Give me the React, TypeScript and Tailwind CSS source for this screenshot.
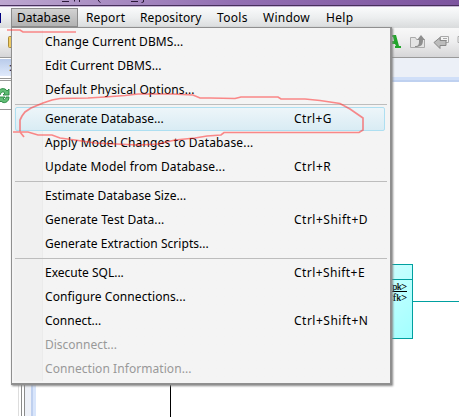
type Item = { label: string; keys?: string; off?: boolean; hot?: boolean; sp: string; ks?: string };

const groups: Item[][] = [
  [
    { label: "Change Current DBMS...", sp: "tracking-[0.09px]" },
    { label: "Edit Current DBMS...", sp: "tracking-[0.1px]" },
    { label: "Default Physical Options...", sp: "tracking-[0.1px]" },
  ],
  [
    { label: "Generate Database...", keys: "Ctrl+G", hot: true, sp: "tracking-[0.03px]", ks: "tracking-[0.4px]" },
    { label: "Apply Model Changes to Database...", sp: "tracking-[0.16px]" },
    { label: "Update Model from Database...", keys: "Ctrl+R", sp: "tracking-[0.14px]", ks: "tracking-[0.5px]" },
  ],
  [
    { label: "Estimate Database Size...", sp: "tracking-[0.05px]" },
    { label: "Generate Test Data...", keys: "Ctrl+Shift+D", sp: "tracking-[0.09px]", ks: "tracking-[0.5px]" },
    { label: "Generate Extraction Scripts...", sp: "tracking-[0.04px]" },
  ],
  [
    { label: "Execute SQL...", keys: "Ctrl+Shift+E", sp: "tracking-[0px]", ks: "tracking-[0.42px]" },
    { label: "Configure Connections...", sp: "tracking-[0.09px]" },
    { label: "Connect...", keys: "Ctrl+Shift+N", sp: "tracking-[0px]", ks: "tracking-[0.5px]" },
    { label: "Disconnect...", off: true, sp: "tracking-[0px]" },
    { label: "Connection Information...", off: true, sp: "tracking-[0.06px]" },
  ],
];

function TitleStrip() {
  return (
    <div className="h-[7px] shrink-0 bg-[#c9b8d6]">
      <div className="h-[5px] bg-linear-to-r from-[#bda7d0] via-[#9370b3] via-50% to-[#7d559f]">
        <svg className="block" width="459" height="5" stroke="#2b1838">
          <path d="M62 1.500h7M131 1.500h7" />
          <path d="M74.500 0v1.500M79.500 0v2M98.500 0v1l2 1.500M143.500 0v2l-2 .5" fill="none" />
        </svg>
      </div>
      <div className="h-px bg-[#47305c]" />
    </div>
  );
}

function MenuBar() {
  return (
    <nav className="flex h-[21px] shrink-0 items-center bg-linear-to-b from-[#fafbfc] via-[#eceeef] to-[#d9dbdc] text-[12px] leading-[18px] text-black">
      <div className="h-[10px] w-px bg-[#000080]" />
      <div className="ml-[10px] flex h-[19px] w-[67px] items-center border border-[#8b8b8b] bg-linear-to-b from-[#d2d2d2] to-[#b2b2b2] pl-[5px]">Database</div>
      <span className="ml-[8px] w-[54px] tracking-[0.16px]">Report</span>
      <span className="w-[77px] tracking-[0.12px]">Repository</span>
      <span className="w-[46px] tracking-[0.3px]">Tools</span>
      <span className="w-[63px] tracking-[0.25px]">Window</span>
      <span className="tracking-[0.3px]">Help</span>
    </nav>
  );
}

function Toolbar() {
  return (
    <div className="flex h-[29px] shrink-0 justify-between bg-linear-to-b from-[#f8f8f8] via-[#ededee] to-[#d6d6d8]">
      <svg width="12" height="29" viewBox="0 0 12 29">
        <rect x="8.5" y="8.5" width="6" height="11" rx="1" fill="#f3cd61" stroke="#a98b3c" />
      </svg>
      <svg width="75" height="29" viewBox="384 28 75 29">
        <path d="M390 35h6l3 11h2v2h-6v-2h1l-1-2h-5v-3h4l-1-4h-3z" fill="#22a52b" />
        <path d="M410.500 37.500h5l1 2h8v8h-14z" fill="#e4e4e4" stroke="#aaa" />
        <path d="M415 46c4 0 4-2 4-6h-2l4-5 4 5h-2c0 5-2 7-8 7z" fill="#8e8e8e" />
        <path d="M440.500 36.500h8v6h-8z" fill="#f3f3f3" stroke="#a9a9a9" />
        <path d="M443 38.500h4M443 40.500h4" stroke="#a9a9a9" />
        <path d="M434 42.500l6-5v3h6v5h-6v3z" fill="#bcbcbc" stroke="#888" />
        <path d="M463 36.500h-5v6h5" fill="#f3f3f3" stroke="#aaa" />
      </svg>
    </div>
  );
}

function Browser() {
  return (
    <aside className="h-full w-[36px] shrink-0 bg-white">
      <div className="h-px bg-[#999]" />
      <div className="mt-px flex h-[17px] items-center bg-linear-to-b from-[#b9cbea] to-[#e0eafb] text-[11px]">
        <span className="ml-[9px]">:</span>
      </div>
      <div className="mt-[2px] h-[3px] border-y border-[#999]" />
      <svg width="11" height="29" viewBox="0 81 11 29">
        <path d="M-2 94c0-6 7-7 9-3l2-2v6H3l2-2c-2-2-4-1-5 2z" fill="#62bd76" stroke="#23843c" strokeWidth=".9" />
        <path d="M9 97c0 6-6 7-8 4l-2 2v-6h6l-2 2c2 1 3 0 3-2z" fill="#62bd76" stroke="#23843c" strokeWidth=".9" />
        <path d="M0 109.500h11" stroke="#999" />
      </svg>
      <div className="flex h-[306px] pl-[18px]">
        <div className="w-px bg-[#ddd]" />
        <div className="ml-[2px] w-px bg-[#8b8b8b]" />
        <div className="ml-[2px] w-px bg-[#8b8b8b]" />
        <div className="w-[6px] bg-[#edf0f7]" />
        <div className="w-[2px] bg-[#bfd0ef]" />
        <div className="w-[3px] bg-[#d8e5fb]" />
      </div>
    </aside>
  );
}

function Canvas() {
  return (
    <main className="flex min-w-0 flex-1 flex-col">
      <div className="h-px bg-[#999]" />
      <div className="h-[19px] bg-[#ecf0f7]" />
      <div className="h-[5px] border-t-[3px] border-[#d0dff8] bg-[#bfd1f0]" />
      <svg className="flex-1" width="423" height="335" viewBox="36 82 423 335">
        <defs>
          <linearGradient id="entity" x2="1" y2="1">
            <stop stopColor="#e0ffff" />
            <stop offset="1" stopColor="#a2ffff" />
          </linearGradient>
        </defs>
        <path d="M170.500 370v47" stroke="#000" />
        <rect x="338.500" y="264.500" width="74" height="74" fill="url(#entity)" stroke="#00a0a0" />
        <path d="M338 279.500h74M413 301.500h46" stroke="#00a0a0" />
        <g fontFamily="Liberation Serif, serif" fontSize="10" stroke="#000" strokeWidth=".2">
          <text x="387" y="290" textLength="20">&lt;pk&gt;</text>
          <text x="387" y="301" textLength="20">&lt;fk&gt;</text>
        </g>
        <path d="M387 291.500h20" stroke="#000" />
      </svg>
    </main>
  );
}

function Row({ item }: { item: Item }) {
  return (
    <div className="h-[24px] pr-[3px] pl-px">
      <div className={"flex h-[24px] items-center rounded-[2px] border pb-px pl-[29px] leading-[20px] " + (item.hot ? "border-[#aedff1] bg-linear-to-b from-[#edf5f9] to-[#d9ecf4]" : "border-transparent") + (item.off ? " text-[#999]" : " text-black")}>
        <span className={"w-[249px] whitespace-nowrap " + item.sp}>{item.label}</span>
        <span className={"whitespace-nowrap " + (item.ks ?? "")}>{item.keys}</span>
      </div>
    </div>
  );
}

function DropMenu() {
  return (
    <div className="absolute top-[27px] left-[11px] h-[358px] w-[381px] border border-r-2 border-b-2 border-[#8f8f8f] bg-[#f4f4f4] p-[2px] text-[12px] shadow-[1px_1px_2px_#888]">
      <div className="h-full bg-linear-to-r from-[#f0f0f0] from-[28px] via-[#e2e2e2] via-[28px] to-[#f4f4f4] to-[29px]">
        {groups.map((group, i) => (
          <div key={i}>
            {i > 0 && <div className="h-[5px] pt-[2px] pl-px"><div className="h-px w-[372px] bg-[#bdbdbd]" /></div>}
            {group.map((item) => <Row key={item.label} item={item} />)}
          </div>
        ))}
      </div>
    </div>
  );
}

export default function App() {
  return (
    <div className="relative flex h-[417px] w-[459px] flex-col overflow-hidden bg-white font-['Noto_Sans',sans-serif]">
      <TitleStrip />
      <MenuBar />
      <Toolbar />
      <div className="flex min-h-0 flex-1">
        <Browser />
        <Canvas />
      </div>
      <DropMenu />
      <svg className="pointer-events-none absolute inset-0" width="459" height="417" fill="none" stroke="#ff3030" strokeOpacity=".55" strokeWidth="1.7">
        <path d="M7 30h13l3 2h53" />
        <path d="M24 137L20 132V120L22 116L25 112L31 108L43 103L52 100L60 98.500L88 98L105 97L125 95.500L138 94H172L193 95L200 98H210L235 98.500L241 97H278L281 99H305L320 100.500L340 103.500L350 109L363 118V130L359 132.500H224L221 135L207 136L195 138L175 140L158 144L138 145L95 143L75 140L60 138L52 135H38L28 132H13" />
      </svg>
    </div>
  );
}
